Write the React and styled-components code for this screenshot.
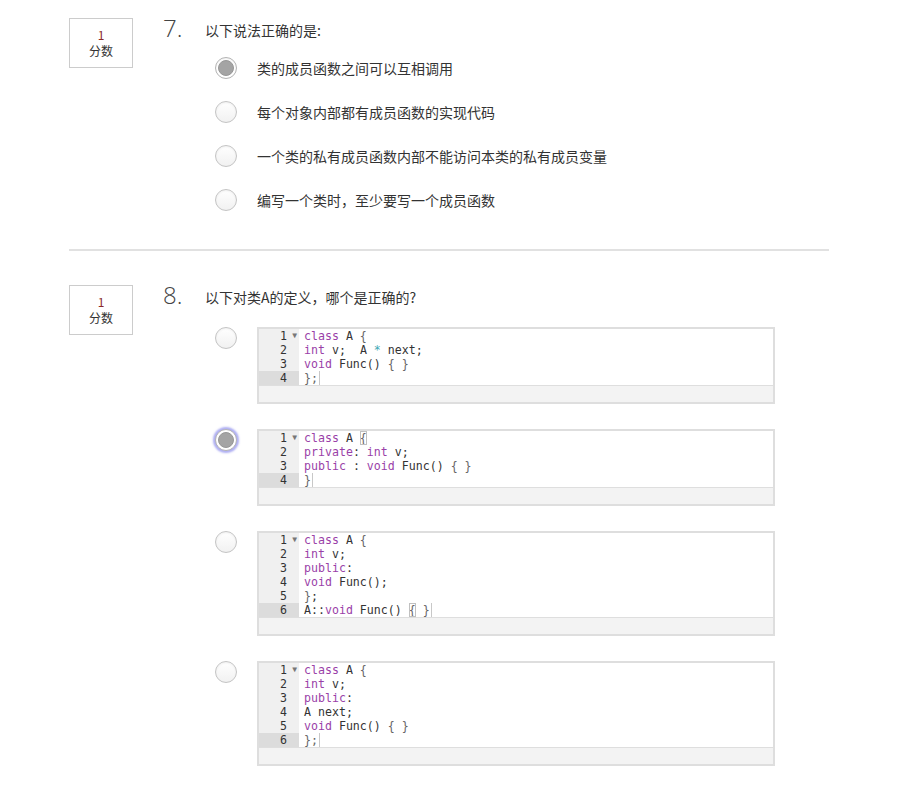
import React from "react";
import styled, { createGlobalStyle, css } from "styled-components";

const Global = createGlobalStyle`
  html, body { margin: 0; padding: 0; background: #fff; }
  body { font-family: "Noto Sans CJK SC", "Noto Sans", sans-serif; color: #333; }
`;

const Page = styled.div`
  padding: 18px 0 40px 69px;
  width: 760px;
`;

const Question = styled.section`
  display: flex;
  align-items: flex-start;
`;

const ScoreBox = styled.div`
  width: 62px;
  height: 48px;
  border: 1px solid #ccc;
  display: flex;
  flex-direction: column;
  align-items: center;
  justify-content: center;
  font-size: 12px;
  line-height: 16px;
  color: #333;
  flex-shrink: 0;
`;

const ScoreValue = styled.span`
  color: #8a2a2a;
`;

const Body = styled.div`
  margin-left: 30px;
  flex: 1;
`;

const Header = styled.div`
  display: flex;
  align-items: center;
  height: 26px;
  margin-top: -1px;
`;

const Num = styled.div`
  width: 42px;
  font-family: "Open Sans", sans-serif;
  font-weight: 300;
  font-size: 24px;
  line-height: 26px;
  color: #444;
  margin-top: -4px;
`;

const QText = styled.div`
  font-size: 14px;
  line-height: 20px;
  color: #333;
`;

const Options = styled.div`
  padding-left: 52px;
  margin-top: ${(p) => p.$top}px;
  display: flex;
  flex-direction: column;
  gap: ${(p) => p.$gap}px;
`;

const TextOption = styled.label`
  display: flex;
  align-items: center;
  height: 44px;
  font-size: 14px;
  color: #333;
`;

const CodeOption = styled.label`
  display: flex;
  align-items: flex-start;
`;

const Radio = styled.span`
  position: relative;
  width: 20px;
  height: 20px;
  border-radius: 50%;
  border: 1px solid #c4c4c4;
  background: linear-gradient(#ffffff, #f1f1f1);
  box-shadow: inset 0 1px 2px rgba(0, 0, 0, 0.06);
  flex-shrink: 0;
  margin-right: 20px;
  ${(p) =>
    p.$checked &&
    css`
      border-color: #b3b3b3;
      background: #fff;
      &::after {
        content: "";
        position: absolute;
        left: 2px;
        top: 2px;
        width: 14px;
        height: 14px;
        border-radius: 50%;
        background: #a4a4a4;
        border: 1px solid #979797;
      }
    `}
  ${(p) =>
    p.$focus &&
    css`
      box-shadow: 0 0 2px 2px rgba(130, 130, 235, 0.65);
    `}
`;

const Separator = styled.hr`
  border: none;
  height: 2px;
  background: #e1e1e1;
  margin: 27px 0 34px;
  width: 760px;
`;

const Editor = styled.div`
  width: 514px;
  border: 2px solid #dedede;
  background: #fff;
`;

const EditorMain = styled.div`
  display: flex;
  font-family: "DejaVu Sans Mono", "Liberation Mono", monospace;
  font-size: 11.6px;
  line-height: 14px;
`;

const Gutter = styled.div`
  width: 40px;
  background: #f0f0f0;
  flex-shrink: 0;
`;

const GutterCell = styled.div`
  position: relative;
  height: 14px;
  padding-right: 12px;
  text-align: right;
  color: #333;
  background: ${(p) => (p.$active ? "#dcdcdc" : "transparent")};
`;

const Fold = styled.span`
  position: absolute;
  right: 2px;
  top: 0;
  font-size: 8px;
  color: #777;
`;

const Lines = styled.div`
  flex: 1;
  padding-left: 5px;
`;

const Line = styled.div`
  height: 14px;
  white-space: pre;
  color: #333;
`;

const Tok = styled.span`
  color: ${(p) =>
    p.$kind === "kw" ? "#9a3fa8" : p.$kind === "br" ? "#666" : p.$kind === "op" ? "#3fa8b5" : "#333"};
  ${(p) =>
    p.$match &&
    css`
      outline: 1px solid #c0c0c0;
      outline-offset: -1px;
    `}
`;

const Cursor = styled.span`
  display: inline-block;
  width: 1px;
  height: 14px;
  background: #c8c8c8;
  vertical-align: top;
  margin-left: 1px;
`;

const Footer = styled.div`
  height: 16px;
  background: #f3f3f3;
  border-top: 1px solid #dedede;
`;

const KW = new Set(["class", "int", "void", "private", "public"]);

function tokenize(text) {
  const re = /([A-Za-z_]+|\s+|.)/g;
  const out = [];
  let m;
  while ((m = re.exec(text))) {
    const t = m[0];
    let kind = "tx";
    if (KW.has(t)) kind = "kw";
    else if (t === "{" || t === "}") kind = "br";
    else if (t === "*") kind = "op";
    out.push({ t, kind, col: m.index });
  }
  return out;
}

function CodeEditor({ lines, matches = [] }) {
  const last = lines.length - 1;
  return (
    <Editor>
      <EditorMain>
        <Gutter>
          {lines.map((_, i) => (
            <GutterCell key={i} $active={i === last}>
              {i + 1}
              {i === 0 && <Fold>▼</Fold>}
            </GutterCell>
          ))}
        </Gutter>
        <Lines>
          {lines.map((l, i) => (
            <Line key={i}>
              {tokenize(l).map((tk, j) => (
                <Tok
                  key={j}
                  $kind={i === last && tk.kind !== "kw" && l.length <= 2 ? "br" : tk.kind}
                  $match={matches.some((mm) => mm[0] === i && mm[1] === tk.col)}
                >
                  {tk.t}
                </Tok>
              ))}
              {i === last && <Cursor />}
            </Line>
          ))}
        </Lines>
      </EditorMain>
      <Footer />
    </Editor>
  );
}

const q7 = [
  "类的成员函数之间可以互相调用",
  "每个对象内部都有成员函数的实现代码",
  "一个类的私有成员函数内部不能访问本类的私有成员变量",
  "编写一个类时，至少要写一个成员函数",
];

const q8 = [
  { lines: ["class A {", "int v;  A * next;", "void Func() { }", "};"] },
  {
    lines: ["class A {", "private: int v;", "public : void Func() { }", "}"],
    matches: [[0, 8]],
    checked: true,
    focus: true,
  },
  {
    lines: ["class A {", "int v;", "public:", "void Func();", "};", "A::void Func() { }"],
    matches: [[5, 15]],
  },
  { lines: ["class A {", "int v;", "public:", "A next;", "void Func() { }", "};"] },
];

export default function App() {
  return (
    <>
      <Global />
      <Page>
        <Question>
          <ScoreBox>
            <ScoreValue>1</ScoreValue>
            <span>分数</span>
          </ScoreBox>
          <Body>
            <Header>
              <Num>7.</Num>
              <QText>以下说法正确的是:</QText>
            </Header>
            <Options $top={3} $gap={0}>
              {q7.map((t, i) => (
                <TextOption key={i}>
                  <Radio $checked={i === 0} />
                  {t}
                </TextOption>
              ))}
            </Options>
          </Body>
        </Question>
        <Separator />
        <Question>
          <ScoreBox>
            <ScoreValue>1</ScoreValue>
            <span>分数</span>
          </ScoreBox>
          <Body>
            <Header>
              <Num>8.</Num>
              <QText>以下对类A的定义，哪个是正确的?</QText>
            </Header>
            <Options $top={17} $gap={25}>
              {q8.map((o, i) => (
                <CodeOption key={i}>
                  <Radio $checked={o.checked} $focus={o.focus} />
                  <CodeEditor lines={o.lines} matches={o.matches} />
                </CodeOption>
              ))}
            </Options>
          </Body>
        </Question>
      </Page>
    </>
  );
}
